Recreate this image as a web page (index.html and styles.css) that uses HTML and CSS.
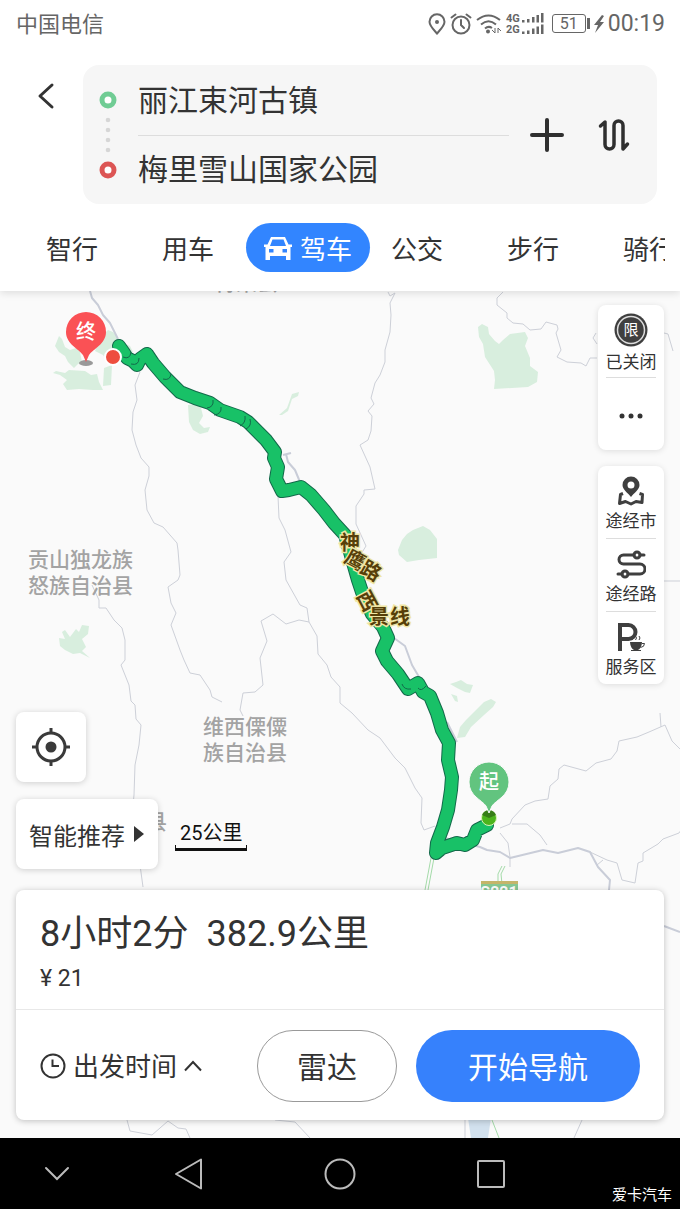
FILE: index.html
```html
<!DOCTYPE html>
<html lang="zh-CN">

<head>
    <meta charset="UTF-8">
    <meta name="viewport" content="width=device-width, initial-scale=1.0">
    <title>驾车路线</title>
    <link rel="stylesheet" href="styles.css">
</head>

<body>
    <header class="header">
        <div class="status-bar">
            <span class="carrier">中国电信</span>
            <div class="status-icons">
                <svg width="18" height="22" viewBox="0 0 18 22" fill="none" stroke="#666" stroke-width="2">
                    <path d="M9 20.500C6 17 1.500 13 1.500 8.800a7.500 7.500 0 0 1 15 0C16.500 13 12 17 9 20.500z" />
                    <circle cx="9" cy="9" r="2" fill="#666" stroke="none" />
                </svg>
                <svg width="22" height="22" viewBox="0 0 22 22" fill="none" stroke="#666" stroke-width="2" stroke-linecap="round">
                    <circle cx="11" cy="12" r="8.500" />
                    <path d="M11 7v5l3 3M1.500 4.500l4-3M20.500 4.500l-4-3" />
                </svg>
                <svg width="26" height="22" viewBox="0 0 26 22" fill="none" stroke="#666" stroke-width="2">
                    <path d="M1 7Q12.500-2 24 7M5 11.500Q12.500 5 20 11.500M9 15.500Q12.500 12.500 16 15" />
                    <circle cx="12" cy="18.500" r="2" fill="#666" stroke="none" />
                    <path d="M19 15v5l-3-3M22 20v-5l3 3" stroke-width="1" />
                </svg>
                <div class="network"><span>4G</span><span>2G</span></div>
                <svg width="22" height="22" viewBox="0 0 22 22" fill="#666">
                    <path d="M0 7h2.500v2.500H0zM5 6h2.500v3.500H5zM10 4h2.500v5.500H10zM14.500 2H17v7.500h-2.500zM19 0h2.500v9.500H19zM0 18.500h2.500V21H0zM5 17.500h2.500V21H5zM10 15.500h2.500V21H10zM14.500 13.500H17V21h-2.500zM19 11.500h2.500V21H19z" />
                </svg>
                <span class="battery">51</span>
                <svg width="10" height="20" viewBox="0 0 10 20" fill="#666">
                    <path d="M8 1L0 11h4L1 19l9-11H6L10 2z" />
                </svg>
                <span class="clock">00:19</span>
            </div>
        </div>

        <div class="search-row">
            <button class="icon-button back" aria-label="返回">
                <svg width="18" height="28" viewBox="0 0 18 28" fill="none" stroke="#333" stroke-width="3" stroke-linecap="round" stroke-linejoin="round">
                    <path d="M15 3L3 14l12 11" />
                </svg>
            </button>
            <form class="search-box">
                <svg class="markers" width="20" height="90" viewBox="0 0 20 90">
                    <circle cx="10" cy="10" r="6" fill="#fff" stroke="#70cc94" stroke-width="5" />
                    <g fill="#d6d6d6">
                        <circle cx="10" cy="30" r="2.300" />
                        <circle cx="10" cy="40" r="2.300" />
                        <circle cx="10" cy="50" r="2.300" />
                        <circle cx="10" cy="60" r="2.300" />
                    </g>
                    <circle cx="10" cy="80" r="6" fill="#fff" stroke="#dc5554" stroke-width="5" />
                </svg>
                <div class="fields">
                    <input class="field" type="text" aria-label="起点" value="丽江束河古镇">
                    <input class="field" type="text" aria-label="终点" value="梅里雪山国家公园">
                </div>
                <button type="button" class="icon-button" aria-label="添加途经点">
                    <svg width="36" height="36" viewBox="0 0 36 36" stroke="#2f2f2f" stroke-width="4" stroke-linecap="round">
                        <path d="M18 3v30M3 18h30" />
                    </svg>
                </button>
                <button type="button" class="icon-button" aria-label="交换起终点">
                    <svg width="32" height="34" viewBox="0 0 32 34" fill="none" stroke="#2f2f2f" stroke-width="3.500" stroke-linecap="round" stroke-linejoin="round">
                        <path d="M2.500 8L7 4v22.500a4.500 4.500 0 0 0 9 0V7.500a4.500 4.500 0 0 1 9 0V31l4.500-5" />
                    </svg>
                </button>
            </form>
        </div>

        <nav class="tabs">
            <button class="tab">智行</button>
            <button class="tab">用车</button>
            <button class="tab active">
                <svg width="28" height="24" viewBox="0 0 28 24">
                    <path fill="#fff" fill-rule="evenodd" d="M7 1h14l3.500 7.500H28v2.500h-1.500v13H22v-4H6v4H1.500V11H0V8.500h3.500zM8.500 3.500L6 10h16l-2.500-6.500zM5 13v3.500h4.500V13zM18.500 13v3.500H23V13z" />
                </svg>
                驾车
            </button>
            <button class="tab">公交</button>
            <button class="tab">步行</button>
            <button class="tab">骑行</button>
        </nav>
    </header>

    <main class="map">
        <svg class="map-canvas" viewBox="0 291 680 847" preserveAspectRatio="xMidYMid slice">
            <!-- parks -->
            <g class="park">
                <path d="M59 336l3 3 3 8 5 3 6-2 4 4 2 10-4 2-4 4-6-6-3-6-6-4-4-6zM100 338l8-8 5 2 8 10 9 4 3 6-8 2-12-1-6 8-4-6-8-4zM53 373l3-2 9 2 4-3 16 1 6 4 6-1 2 8 4 8h-10l-14-1-12 1-4-6 4-4-7-5zM104 368l8-3-1 20-8 1z" />
                <path d="M188 405l8-1 5 4 2 8-4 7 5 5 6-1-2 5-8 2-7-4-4-8z" />
                <path d="M279 415l8-7 5-14 7-2-1 4-6 3-4 12-6 4z" />
                <path d="M478 327l4-3 6 3 1 7 6 7 4 3 4-4 7-6 15-2 3 6-3 8 5 12v8l8 6-1 10-9 5-34 2 1-9-1-9-9-14-2-13-4-7z" />
                <path d="M399 555l-1-5 4-10 5-6 6-4 10-4 7 4 7 9v19l-18 2-12 2z" />
                <path d="M59 638l6 1-3-7 3-2 5 7 6-8 3 3 3-7 7 1-1 8-6 5 4 8-4 4 8 7-10-5-7 1-8-4-5-4z" />
                <path d="M450 684l6-2 5-2 6 4 6 1-3 8-5-1-8-4zM451 694l6 2 1 6-3-1z" />
                <path d="M457 738l3-11 6-7 8-8 10-10 7-3 5 3-3 5-9 8-13 12-6 10z" />
            </g>
            <path fill="#d2e1ee" d="M468 1118h23l-3 20h-17z" />

            <!-- county roads -->
            <g class="road">
                <path d="M140 372l-5 13 2 15-4 12-1 18 4 15 5 13 8 9v9l-4 14 2 20 7 13 9 4 14 16 1 7 2 25-2 5-10 7 3 16 5 10-5 12 9 25 4 10 6 13 10 2 10 15 2 7 10 5" />
                <path d="M278 496l1 22 6 12 6 22-7 10 2 18 14 25 7 3 2 14 8 14 1 18 9 11 4 12 9 10v16l12 10 16 17 12 8 15 20 10 10 10 20 7 10-1 25 3 7 11-4" />
                <path d="M309 622l-10-2-13 4-13-10-12 7 6 20-7 17 3 27-8 7-12 1-3 17 3 6" />
                <path d="M92 585l7 15v8h7l8 12 8 8 3 12v20l-4 5 8 20 2 16 4 4 1 14 5 6-2 20-4 20-1 30-1 10 7 60 3 22" />
                <path d="M388 292l2 4 5-3-5 10 1 12-1 17-5 18v12l-5 13-5 8-4 15 3 6-6 7 4 5-1 15-3 9-8 5 10 22 5 22-11 1v4l-8 12v18l10 22-5 8" />
                <path d="M503 292l-6 6v7l10 8v5l6 5 10 1 7 6 11-1 5-7 11 3 1 4-2 4 5 17-4 7 10 5 14 1 5 3 4-8h7M596 333l-3 5 4 6M664 333l4 1 5 17M664 581h16" />
                <path d="M500 828l10-4 2-5 13-14 10-4 13-2 2-13 8-7 1-10 5-4 22 6 10-8 15-4 6-8 2-10 18-4 12-5 16-7 7 16 8 8M661 727l-1-14M512 824h15l13 11 7 10M500 833l8 10 2 14v10M603 860l-6 5" />
                <path d="M590 852l17 8 10 3 5 17 13 3 3-20 5-2v-8l15-9 5-5 16-6 7-10" />
                <path d="M127 1120l3 11 22 4 16-14 10 7 8 1 4 9M275 1120l20 2 15 16M465 1120v18M582 1120l-8 18" />
            </g>
            <!-- trunk roads -->
            <g class="road trunk">
                <path d="M90 291l2 7 6 7 5 10 7 8 5 10 3 6M283 455l8-2M286 454l2 8 7 8 5 12M394 638l11 8 7 19 10 17M447 722l10 20M664 926l16 6" />
                <path d="M445 838l35 9 7 3 13 2 10 6 33-8 15 3 20-5 12 4 8 15 12 13-1 10" />
            </g>
            <g class="road green">
                <path d="M431 858l-6 32M434 858l-6 32M505 866l-4 8 1 10M502 866l-4 8v10M492 1120l7 18" />
            </g>

            <!-- place names -->
            <g class="place">
                <text x="215" y="290">得荣县</text>
                <text x="28" y="567">贡山独龙族</text>
                <text x="28" y="593">怒族自治县</text>
                <text x="203" y="734">维西傈僳</text>
                <text x="203" y="760">族自治县</text>
                <text x="146" y="829">县</text>
            </g>
            <path fill="#c5b56a" d="M481 881h37v3h-37z" />
            <path fill="#86c894" d="M481 884h37v18h-37z" />
            <text class="road-sign" x="499" y="898">S221</text>

            <!-- route: dark casing under the green line -->
            <path class="route-casing" d="M119 346l5 7 3 5 6 3 4 4 3-6 7-5 6 9 12 14 15 15 15 6 15 5 10 7 20 7 8 5 10 10 8 8 9 12-1 6 4 9-2 12 6 12 7-1 12-3 10 8 13 15 10 13 11 12 5 17 8 28 4 12 10 22 11 13 5 11-6 13 5 10 11 13 10 15 10-6 5 9 7 4 7 17 5 17 7 13-1 17 4 17-1 13-3 20-5 17-6 16-1 10 6-5 15-5 8 2 8-5 4-10 10-5" />
            <path class="route-line" d="M119 346l5 7 3 5 6 3 4 4 3-6 7-5 6 9 12 14 15 15 15 6 15 5 10 7 20 7 8 5 10 10 8 8 9 12-1 6 4 9-2 12 6 12 7-1 12-3 10 8 13 15 10 13 11 12 5 17 8 28 4 12 10 22 11 13 5 11-6 13 5 10 11 13 10 15 10-6 5 9 7 4 7 17 5 17 7 13-1 17 4 17-1 13-3 20-5 17-6 16-1 10 6-5 15-5 8 2 8-5 4-10 10-5" />
            <path class="route-joint" d="M123 357q7 3 8-5M131 364q8 2 8-6M163 379q7 2 8-5M207 408q7-1 6-8M214 415q8-1 7-8M240 426q6-3 5-10M246 429q6-3 4-10M402 684q2 6 9 5M418 688q3 4 8-2" />

            <g class="road-name">
                <text transform="translate(350 543)" y="7">神</text>
                <text transform="translate(355 560) rotate(28)" y="7">鹰</text>
                <text transform="translate(371 571) rotate(30)" y="7">路</text>
                <text transform="translate(367 601) rotate(62)" y="7">西</text>
                <text transform="translate(379 617)" y="7">景</text>
                <text transform="translate(400 617)" y="7">线</text>
            </g>

            <!-- destination -->
            <ellipse cx="86" cy="363" rx="7" ry="3" fill="#999" />
            <path fill="#fa5155" d="M86 362l-3-7C79 349 66 344 66 332a20 20 0 0 1 40 0c0 12-13 17-17 23z" />
            <text class="pin-text" x="86" y="339">终</text>
            <circle cx="113" cy="357" r="8" fill="#ee4e3e" stroke="#fff" stroke-width="2" />

            <!-- origin -->
            <circle cx="489" cy="818" r="7.500" fill="#4cb41c" stroke="#d9f2b8" />
            <path fill="#367d17" d="M482 815a7.500 7.500 0 0 1 14 0l-7 3z" />
            <path fill="#62c47f" stroke="#fafafa" d="M489 813l-3-7C482 800 469 796 469 782a20 20 0 0 1 40 0c0 14-13 18-17 24z" />
            <text class="pin-text" x="489" y="789">起</text>
        </svg>

        <div class="overlay">
            <div class="side-tools">
                <div class="tool-card">
                    <button class="tool">
                        <svg width="34" height="34" viewBox="0 0 34 34">
                            <circle cx="17" cy="17" r="16.500" fill="#3f3f3f" />
                            <circle cx="17" cy="17" r="13.500" fill="none" stroke="#ddd" stroke-width="1.500" />
                            <text class="limit-text" x="17" y="22">限</text>
                        </svg>
                        已关闭
                    </button>
                    <button class="tool" aria-label="更多">
                        <svg width="24" height="6" viewBox="0 0 24 6" fill="#333">
                            <circle cx="3" cy="3" r="2.500" />
                            <circle cx="12" cy="3" r="2.500" />
                            <circle cx="21" cy="3" r="2.500" />
                        </svg>
                    </button>
                </div>
                <div class="tool-card">
                    <button class="tool">
                        <svg width="28" height="30" viewBox="0 0 28 30">
                            <path fill="#3f3f3f" fill-rule="evenodd" d="M14 21C11 17 5.500 13.500 5.500 9a8.500 8.500 0 0 1 17 0c0 4.500-5.500 8-8.500 12zM14 5.500a3.500 3.500 0 1 0 0 7 3.500 3.500 0 0 0 0-7z" />
                            <path fill="none" stroke="#3f3f3f" stroke-width="3" stroke-linejoin="round" d="M6 17.500l-2.500 1-1 9 6-2 5.500 2.500 5-2.500 6 1 .5-8-3-1" />
                        </svg>
                        途经市
                    </button>
                    <button class="tool">
                        <svg width="30" height="30" viewBox="0 0 30 30" fill="none" stroke="#3f3f3f" stroke-width="3" stroke-linecap="round">
                            <path d="M24 6h4M18 6H7.500a4.500 4.500 0 0 0 0 9H24a4.500 4.500 0 0 1 0 10H12M6 25H2" />
                            <circle cx="21" cy="6" r="3" />
                            <circle cx="9" cy="25" r="3" />
                        </svg>
                        途经路
                    </button>
                    <button class="tool">
                        <svg width="30" height="30" viewBox="0 0 30 30" fill="none" stroke="#3f3f3f">
                            <path stroke-width="4" d="M4 29V3h8.500a6.500 6.500 0 0 1 0 14H4" />
                            <path fill="#3f3f3f" stroke="none" d="M14 20h12c0 4-2 7-4 8h-4c-2-1-4-4-4-8z" />
                            <path d="M26 21.500h2.500q0 3.500-4 4M15 28.500h10M16 18q2-2 0-4M19.500 18q2-2 0-4M23 18q2-2 0-4" />
                        </svg>
                        服务区
                    </button>
                </div>
            </div>

            <button class="float-button locate" aria-label="定位">
                <svg width="40" height="40" viewBox="0 0 40 40" fill="none" stroke="#3a3a3a" stroke-width="3">
                    <circle cx="20" cy="20" r="14" />
                    <circle cx="20" cy="20" r="5.500" fill="#3a3a3a" stroke="none" />
                    <path d="M20 1v6M20 33v6M1 20h6M33 20h6" />
                </svg>
            </button>

            <div class="recommend-row">
                <button class="float-button recommend">
                    智能推荐
                    <svg width="12" height="16" viewBox="0 0 12 16" fill="#333">
                        <path d="M1 0l10 8L1 16z" />
                    </svg>
                </button>
                <span class="scale">25公里</span>
            </div>

            <section class="sheet">
                <div class="summary">
                    <h1 class="summary-title"><span>8小时2分</span><span>382.9公里</span></h1>
                    <p class="toll">¥ 21</p>
                </div>
                <div class="actions">
                    <button class="depart">
                        <svg width="26" height="26" viewBox="0 0 26 26" fill="none" stroke="#333" stroke-width="2">
                            <circle cx="13" cy="13" r="11.500" />
                            <path d="M12.500 6.500V13H19" />
                        </svg>
                        <span>出发时间</span>
                        <svg width="18" height="12" viewBox="0 0 18 12" fill="none" stroke="#333" stroke-width="2">
                            <path d="M1 10.500L9 2l8 8.500" />
                        </svg>
                    </button>
                    <button class="pill radar">雷达</button>
                    <button class="pill start">开始导航</button>
                </div>
            </section>
        </div>
    </main>

    <footer class="nav-bar">
        <button class="icon-button" aria-label="收起">
            <svg width="26" height="16" viewBox="0 0 26 16" fill="none" stroke="#bbb" stroke-width="2" stroke-linecap="round">
                <path d="M2 2l11 11L24 2" />
            </svg>
        </button>
        <button class="icon-button" aria-label="后退">
            <svg width="30" height="34" viewBox="0 0 30 34" fill="none" stroke="#bbb" stroke-width="2" stroke-linejoin="round">
                <path d="M27 2.500v29L2 17z" />
            </svg>
        </button>
        <button class="icon-button" aria-label="主页">
            <svg width="32" height="32" viewBox="0 0 32 32" fill="none" stroke="#bbb" stroke-width="2">
                <circle cx="16" cy="16" r="14.500" />
            </svg>
        </button>
        <button class="icon-button" aria-label="最近任务">
            <svg width="30" height="30" viewBox="0 0 30 30" fill="none" stroke="#bbb" stroke-width="2">
                <rect x="2" y="2" width="26" height="26" rx="1" />
            </svg>
        </button>
        <span class="watermark">爱卡汽车</span>
    </footer>
</body>

</html>
```

FILE: styles.css
```css
* {
    box-sizing: border-box;
}

body {
    margin: 0;
    min-height: 100vh;
    display: flex;
    flex-direction: column;
    font-family: Roboto, "Noto Sans CJK SC", sans-serif;
    color: #333;
    background: #fff;
}

button {
    margin: 0;
    padding: 0;
    border: none;
    background: none;
    font: inherit;
    color: inherit;
    cursor: pointer;
    white-space: nowrap;
}

svg {
    display: block;
    flex: none;
}

.icon-button {
    display: flex;
    align-items: center;
    justify-content: center;
}

/* header */
.header {
    position: relative;
    z-index: 1;
    padding-bottom: 19px;
    background: #fff;
    box-shadow: 0 2px 8px rgba(0, 0, 0, 0.12);
}

.status-bar {
    display: flex;
    align-items: center;
    justify-content: space-between;
    height: 47px;
    padding: 0 15px 0 16px;
    color: #666;
}

.carrier {
    padding-bottom: 4px;
    font-size: 22px;
}

.status-icons {
    display: flex;
    align-items: center;
    gap: 4px;
}

.network {
    display: flex;
    flex-direction: column;
    font-size: 11px;
    font-weight: bold;
    line-height: 11px;
    margin-right: -2px;
}

.battery {
    position: relative;
    width: 34px;
    margin: 0 4px;
    border: 1px solid #666;
    border-radius: 3px;
    font-size: 16px;
    line-height: 17px;
    text-align: center;
}

.battery::after {
    content: "";
    position: absolute;
    top: 3px;
    right: -5px;
    width: 3px;
    height: 11px;
    background: #666;
}

.clock {
    font-size: 23px;
}

.search-row {
    display: flex;
    align-items: flex-start;
    padding: 18px 23px 0 0;
}

.back {
    width: 83px;
    height: 62px;
    padding-right: 0;
    padding-left: 8px;
}

.search-box {
    flex: 1;
    display: flex;
    align-items: center;
    gap: 20px;
    min-width: 0;
    height: 139px;
    padding: 0 27px 0 15px;
    border-radius: 16px;
    background: #f6f6f6;
}

.fields {
    flex: 1;
    min-width: 0;
}

.field {
    display: block;
    width: 100%;
    height: 68px;
    padding: 0 0 5px;
    border: none;
    outline: none;
    background: none;
    font: inherit;
    font-size: 30px;
    color: #333;
}

.field + .field {
    border-top: 1px solid #ddd;
}

.search-box .icon-button + .icon-button {
    margin-left: 13px;
}

.tabs {
    display: flex;
    margin: 19px 15px 0 14px;
    overflow: hidden;
}

.tab {
    flex: none;
    height: 49px;
    padding: 0 32px;
    font-size: 26px;
}

.tab.active {
    display: flex;
    align-items: center;
    gap: 8px;
    margin-right: -11px;
    padding: 0 18px;
    border-radius: 25px;
    background: #3285ff;
    color: #fff;
}

/* map */
.map {
    flex: 1;
    position: relative;
    display: flex;
    background: #fafafa;
}

.map-canvas {
    position: absolute;
    width: 100%;
    height: 100%;
}

.park {
    fill: #d8eede;
}

.road {
    fill: none;
    stroke: #cdd0d8;
    stroke-width: 1;
    stroke-linejoin: round;
}

.road.trunk {
    stroke: #c9cdd8;
    stroke-width: 2;
}

.road.green {
    stroke: #a4dba9;
}

.place {
    font-size: 21px;
    font-weight: 500;
    fill: #a3a3a3;
}

.road-sign {
    font-size: 16px;
    font-weight: bold;
    fill: #fff;
    text-anchor: middle;
}

.route-casing,
.route-line {
    fill: none;
    stroke: #13694a;
    stroke-width: 14;
    stroke-linecap: round;
    stroke-linejoin: round;
}

.route-line {
    stroke: #18c167;
    stroke-width: 12;
}

.route-joint {
    fill: none;
    stroke: #13694a;
}

.road-name {
    font-size: 20px;
    font-weight: bold;
    text-anchor: middle;
    fill: #573f09;
    stroke: #efe6a5;
    stroke-width: 3;
    paint-order: stroke;
}

.pin-text {
    font-size: 20px;
    font-weight: 500;
    fill: #fff;
    text-anchor: middle;
}

.overlay {
    position: relative;
    flex: 1;
    display: flex;
    flex-direction: column;
    align-items: flex-start;
    min-width: 0;
    padding: 14px 16px 18px;
}

.side-tools {
    align-self: flex-end;
    display: flex;
    flex-direction: column;
    gap: 16px;
    margin-bottom: auto;
}

.tool-card {
    width: 66px;
    padding: 0 8px;
    border-radius: 8px;
    background: #fff;
    box-shadow: 0 1px 6px rgba(0, 0, 0, 0.12);
}

.tool {
    display: flex;
    flex-direction: column;
    align-items: center;
    justify-content: center;
    gap: 4px;
    width: 100%;
    height: 72px;
    padding-top: 3px;
    font-size: 17px;
    line-height: 22px;
}

.tool + .tool {
    height: 73px;
    border-top: 1px solid #ddd;
}

.limit-text {
    font-size: 15px;
    fill: #fff;
    text-anchor: middle;
}

.float-button {
    display: flex;
    align-items: center;
    justify-content: center;
    height: 70px;
    border-radius: 8px;
    background: #fff;
    box-shadow: 0 1px 6px rgba(0, 0, 0, 0.18);
}

.locate {
    width: 70px;
    margin: 28px 0 17px;
}

.recommend-row {
    display: flex;
    align-items: center;
    gap: 17px;
    margin-bottom: 21px;
}

.recommend {
    gap: 8px;
    padding: 0 13px;
    font-size: 24px;
}

.scale {
    padding: 0 4px;
    border: 2px solid #111;
    border-width: 0 1px 3px;
    border-image: linear-gradient(to top, #111 6px, transparent 6px) 3 1;
    font-size: 20px;
    line-height: 30px;
    color: #111;
}

/* bottom sheet */
.sheet {
    width: 100%;
    border-radius: 8px;
    background: #fff;
    box-shadow: 0 1px 6px rgba(0, 0, 0, 0.24);
}

.summary {
    height: 120px;
    padding: 20px 24px 0;
    border-bottom: 1px solid #e8e8e8;
}

.summary-title {
    display: flex;
    gap: 18px;
    margin: 0;
    font-size: 36px;
    font-weight: normal;
    line-height: 48px;
}

.toll {
    margin: 6px 0 0;
    font-size: 23px;
    line-height: 30px;
}

.actions {
    display: flex;
    align-items: center;
    gap: 19px;
    padding: 20px 24px 18px;
}

.depart {
    display: flex;
    align-items: center;
    gap: 7px;
    margin-right: auto;
    font-size: 26px;
}

.depart span {
    padding-bottom: 3px;
}

.pill {
    height: 72px;
    padding-bottom: 3px;
    border-radius: 36px;
    font-size: 30px;
}

.radar {
    width: 140px;
    border: 1px solid #999;
}

.start {
    width: 224px;
    background: #3681fc;
    color: #fff;
}

/* system bar */
.nav-bar {
    position: relative;
    display: grid;
    grid-template-columns: 3fr 4fr 4fr 4fr 3fr;
    height: 71px;
    background: #000;
}

.watermark {
    position: absolute;
    right: 8px;
    bottom: 4px;
    font-size: 15px;
    line-height: 20px;
    color: #fff;
}
```
